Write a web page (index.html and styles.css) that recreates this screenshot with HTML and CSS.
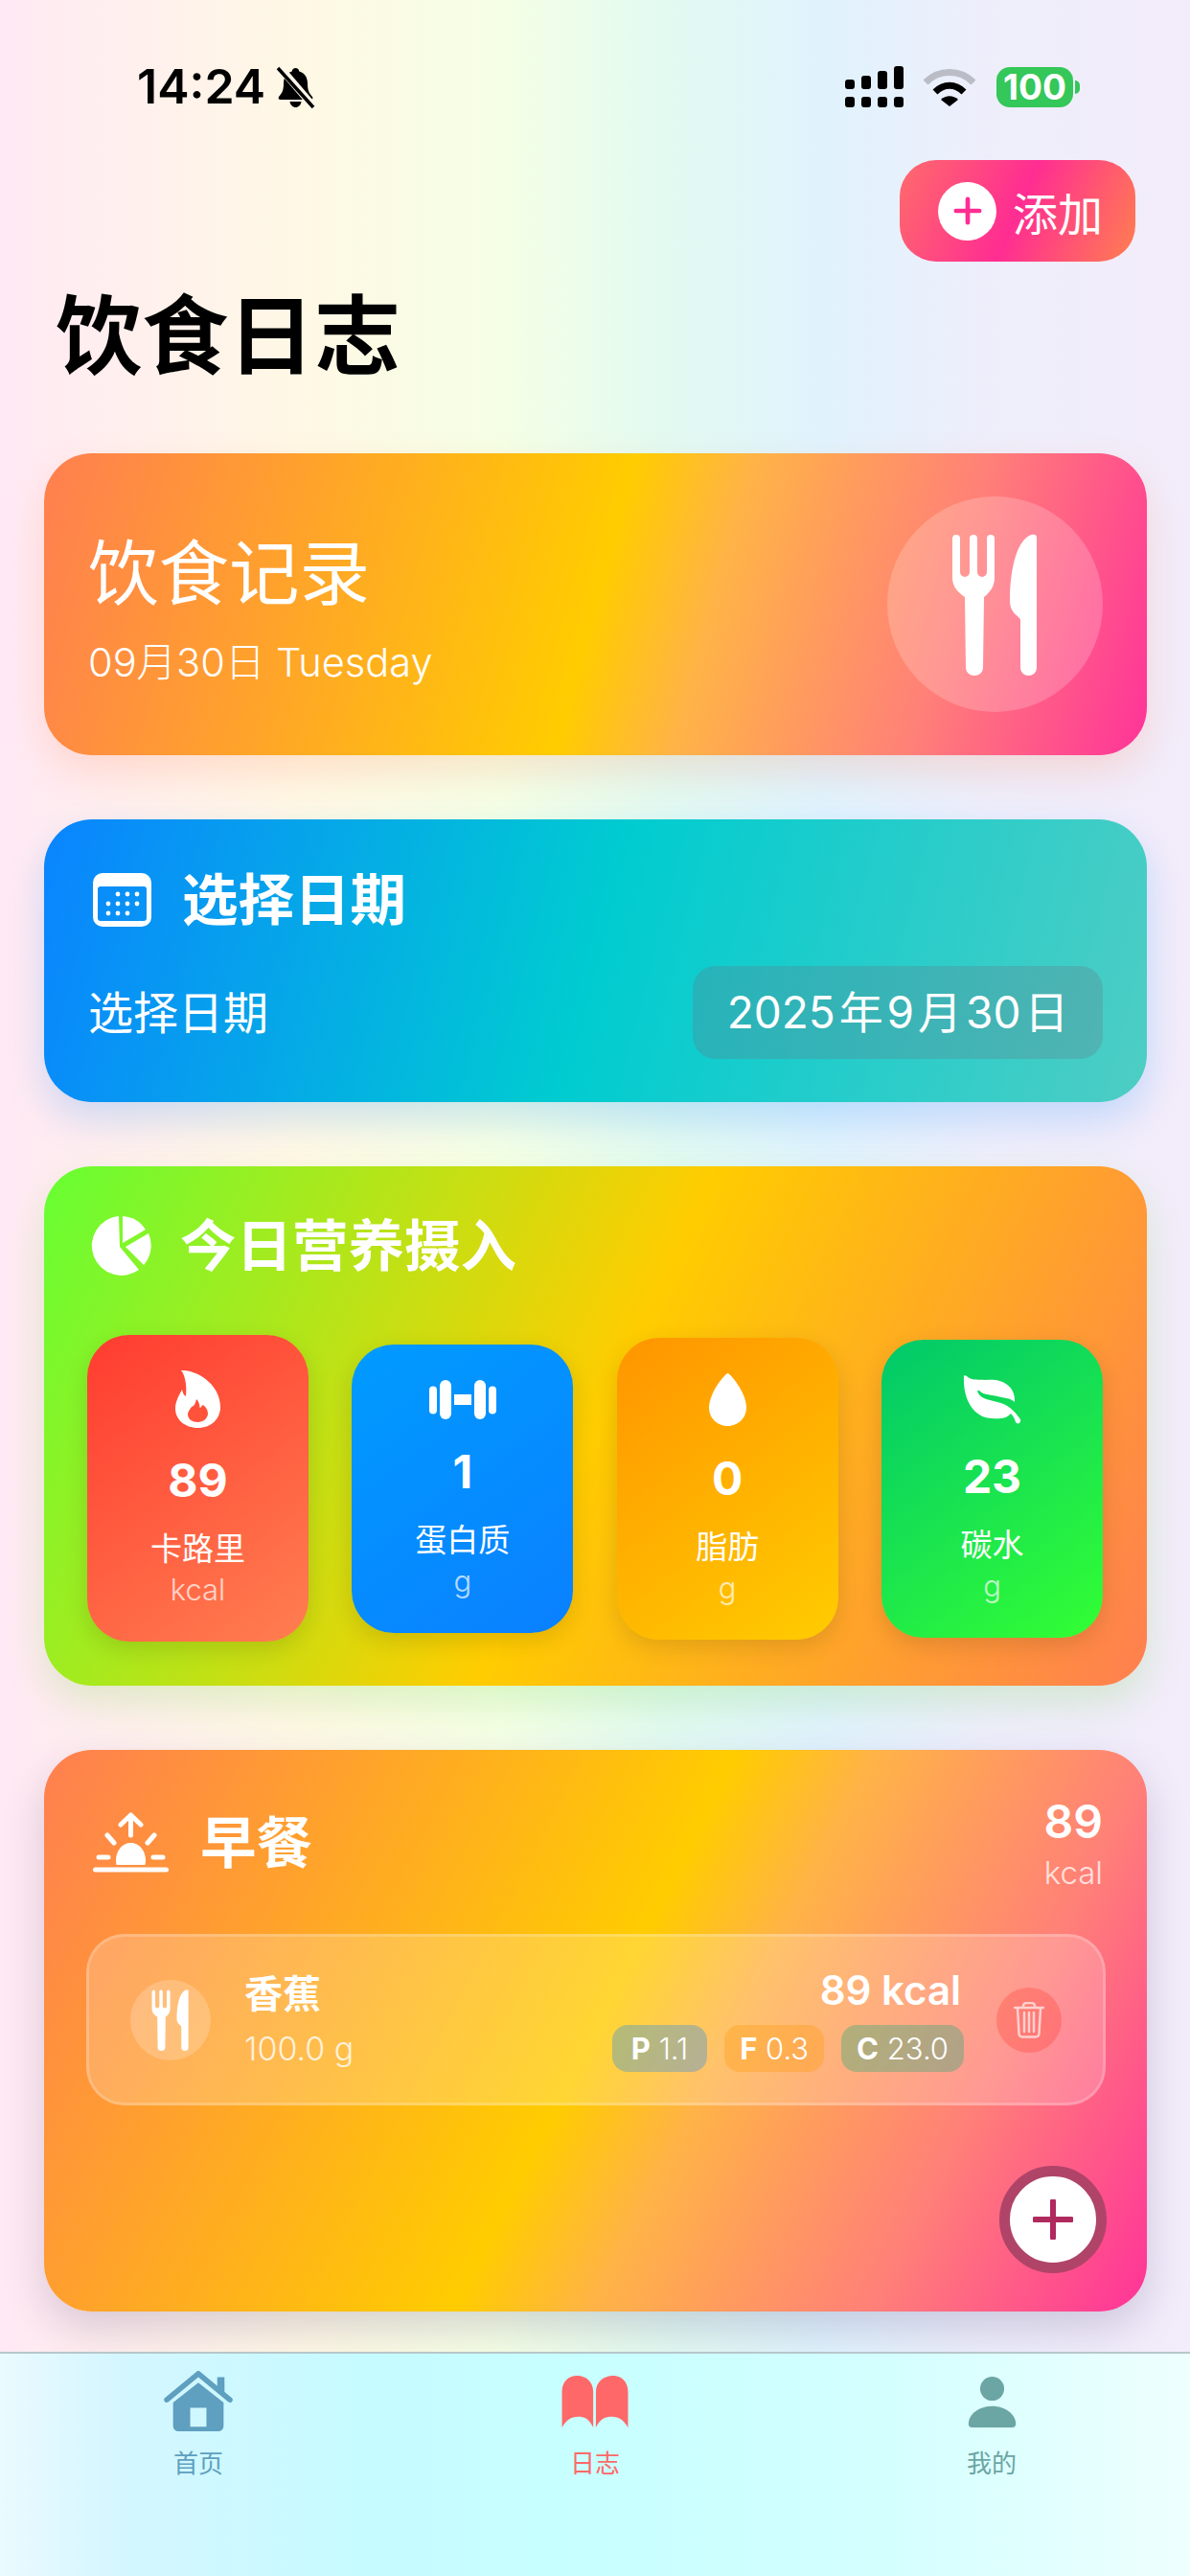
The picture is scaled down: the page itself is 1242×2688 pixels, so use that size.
FILE: index.html
```html
<!DOCTYPE html>
<html lang="zh-CN">
<head>
<meta charset="utf-8">
<title>饮食日志</title>
<link rel="stylesheet" href="styles.css">
</head>
<body>
<svg class="defs" width="0" height="0" aria-hidden="true">
  <symbol id="cutlery" viewBox="0 0 90 148">
    <path d="M0 5a4 4 0 0 1 8 0V40a5 5 0 0 0 10 0V5a4 4 0 0 1 8 0V40a5 5 0 0 0 10 0V5a4 4 0 0 1 8 0V46C44 56 38 62 33 66L32 140a9 8 0 0 1-18 0L13 66C7 62 0 56 0 46Z"/>
    <path d="M88 4V140a8.500 8 0 0 1-17 0L71 90C71 86 60 84 60 70C60 40 66 10 80 2C84 0 88 0 88 4Z"/>
  </symbol>
</svg>

<div class="status">
  <div class="status-left">
    <span class="time">14:24</span>
    <svg class="bell" viewBox="0 0 39 42">
      <path d="M19.500 1C21.500 1 23 2.500 23.300 4.500C29 6 32 11 32 17C32 24 33.500 27 37 31C38 33 37 34 35 34H4C2 34 1 33 2 31C5.500 27 7 24 7 17C7 11 10 6 15.700 4.500C16 2.500 17.500 1 19.500 1Z"/>
      <path d="M13.500 36H25.500C25 39.500 22.500 42 19.500 42C16.500 42 14 39.500 13.500 36Z"/>
      <path class="bell-gap" d="M2 -1L38 41"/>
      <path class="bell-slash" d="M1 1L38 42"/>
    </svg>
  </div>
  <div class="status-right">
    <svg class="signal" viewBox="0 0 61 43">
      <rect x="0" y="14" width="10" height="10" rx="3"/><rect x="17" y="10" width="10" height="14" rx="3"/><rect x="34" y="5" width="10" height="19" rx="3"/><rect x="51" y="0" width="10" height="24" rx="3"/>
      <rect x="0" y="32" width="10" height="11" rx="3"/><rect x="17" y="32" width="10" height="11" rx="3"/><rect x="34" y="32" width="10" height="11" rx="3"/><rect x="51" y="32" width="10" height="11" rx="3"/>
    </svg>
    <svg class="wifi" viewBox="0 0 54 40">
      <path class="wifi-dim" d="M2 15C16 1 38 1 52 15"/>
      <path class="wifi-on" d="M12 25C21 16 33 16 42 25"/>
      <path d="M18 33C23 28 31 28 36 33L27 40Z"/>
    </svg>
    <div class="battery"><span class="battery-body">100</span><span class="battery-cap"></span></div>
  </div>
</div>

<header class="page-head">
  <button class="add-btn">
    <span class="add-disc"><svg viewBox="0 0 32 32"><path d="M16 3V29M3 16H29"/></svg></span>
    <span>添加</span>
  </button>
  <h1 class="page-title">饮食日志</h1>
</header>

<main class="feed">
  <section class="card card-hero">
    <div class="hero-text">
      <div class="hero-title">饮食记录</div>
      <div class="hero-sub">09月30日 Tuesday</div>
    </div>
    <div class="hero-disc"><svg class="hero-icon"><use href="#cutlery"/></svg></div>
  </section>

  <section class="card card-date">
    <div class="card-head">
      <svg class="ico-cal" viewBox="0 0 61 56">
        <path fill-rule="evenodd" d="M10 0H51A10 10 0 0 1 61 10V46A10 10 0 0 1 51 56H10A10 10 0 0 1 0 46V10A10 10 0 0 1 10 0ZM8 14A3 3 0 0 0 5 17V47A3 3 0 0 0 8 50H53A3 3 0 0 0 56 47V17A3 3 0 0 0 53 14Z"/>
        <circle cx="26" cy="22" r="2.400"/><circle cx="36" cy="22" r="2.400"/><circle cx="46" cy="22" r="2.400"/>
        <circle cx="16" cy="32" r="2.400"/><circle cx="26" cy="32" r="2.400"/><circle cx="36" cy="32" r="2.400"/><circle cx="46" cy="32" r="2.400"/>
        <circle cx="16" cy="42" r="2.400"/><circle cx="26" cy="42" r="2.400"/><circle cx="36" cy="42" r="2.400"/>
      </svg>
      <h2 class="card-title">选择日期</h2>
    </div>
    <div class="date-row">
      <span class="date-label">选择日期</span>
      <span class="date-pill">2025 年 9 月 30 日</span>
    </div>
  </section>

  <section class="card card-nutri">
    <div class="card-head">
      <svg class="ico-pie" viewBox="0 0 63 63">
        <path d="M29 1A31 31 0 1 0 50 57L30 33Z"/>
        <path d="M33 1A31 31 0 0 1 57 15L33 29Z"/>
        <path d="M60 19A31 31 0 0 1 55 52L36 33Z"/>
      </svg>
      <h2 class="card-title">今日营养摄入</h2>
    </div>
    <div class="tiles">
      <div class="tile tile-cal">
        <svg class="ico-flame" viewBox="0 0 47 60"><path fill-rule="evenodd" d="M7 1C5 0 6 0 8 0C28 1 47 18 47 38C47 51 37 60 23.500 60C10 60 0 51 0 40C0 32 4 26 7 20C8 24 9 26 11 27C12 18 11 8 7 1ZM22 30C21 34 20 37 17 38C15.500 40 13 43 13 46C13 51 18 54 23.500 54C29 54 34 50 34 45C34 40 30 36 28 36C27.500 38 26.500 39 25.500 39C25.500 36 24.500 32 22 30Z"/></svg>
        <div class="tile-val">89</div><div class="tile-name">卡路里</div><div class="tile-unit">kcal</div>
      </div>
      <div class="tile tile-pro">
        <svg class="ico-bell2" viewBox="0 0 70 41"><rect x="0" y="6.500" width="8" height="29" rx="4"/><rect x="11" y="0" width="12" height="41" rx="6"/><rect x="26" y="15" width="18" height="11"/><rect x="47" y="0" width="12" height="41" rx="6"/><rect x="62" y="6.500" width="8" height="29" rx="4"/></svg>
        <div class="tile-val">1</div><div class="tile-name">蛋白质</div><div class="tile-unit">g</div>
      </div>
      <div class="tile tile-fat">
        <svg class="ico-drop" viewBox="0 0 39 55"><path d="M19.500 0C22 0 39 20 39 36C39 47 30 55 19.500 55C9 55 0 47 0 36C0 20 17 0 19.500 0Z"/></svg>
        <div class="tile-val">0</div><div class="tile-name">脂肪</div><div class="tile-unit">g</div>
      </div>
      <div class="tile tile-carb">
        <svg class="ico-leaf" viewBox="0 0 61 51"><path d="M1 2C0 0 3 0 4 1C8 5 14 5 24 5C42 3 55 12 54 28C50 24 44 24 36 22C26 20 20 20 17 16C15 15 15 17 16 19C20 25 28 26 36 28C46 30 53 36 60 46C61 50 57 52 55 49C54 45 52 42 50 40C46 45 38 46 30 45C10 44 0 24 1 2Z"/></svg>
        <div class="tile-val">23</div><div class="tile-name">碳水</div><div class="tile-unit">g</div>
      </div>
    </div>
  </section>

  <section class="card card-meal">
    <div class="meal-head">
      <div class="meal-left">
        <svg class="ico-sun" viewBox="0 0 79 63">
          <path class="sun-stroke" d="M39.500 3V24M29 13L39.500 3L50 13M15 24L22 32M64 24L57 32M6 47H16M63 47H73M2.500 60H76.500"/>
          <path d="M24.500 55C22 42 30 32 39.500 32C49 32 57 42 54.500 55Z"/>
        </svg>
        <h2 class="card-title">早餐</h2>
      </div>
      <div class="meal-total">
        <div class="meal-num">89</div>
        <div class="meal-unit">kcal</div>
      </div>
    </div>
    <div class="food">
      <div class="food-disc"><svg class="food-icon"><use href="#cutlery"/></svg></div>
      <div class="food-info">
        <div class="food-name">香蕉</div>
        <div class="food-qty">100.0 g</div>
      </div>
      <div class="food-macros">
        <div class="food-kcal">89 kcal</div>
        <div class="chips">
          <span class="chip chip-p"><b>P</b> 1.1</span>
          <span class="chip chip-f"><b>F</b> 0.3</span>
          <span class="chip chip-c"><b>C</b> 23.0</span>
        </div>
      </div>
      <div class="food-del">
        <svg viewBox="0 0 32 38"><path d="M1 6H31M10 6V4A3 3 0 0 1 13 1H19A3 3 0 0 1 22 4V6M4 6L5.500 33A3.500 3.500 0 0 0 9 36.500H23A3.500 3.500 0 0 0 26.500 33L28 6M11 11V31M16 11V31M21 11V31"/></svg>
      </div>
    </div>
    <div class="fab"><svg viewBox="0 0 42 42"><path d="M21 2V40M2 21H40"/></svg></div>
  </section>
</main>

<nav class="tabbar">
  <div class="tab tab-home">
    <svg class="ico-home" viewBox="0 0 76 68">
      <path fill-rule="evenodd" d="M38 13L66 35V61A6 6 0 0 1 60 67H16A6 6 0 0 1 10 61V35ZM29 41V62H47V41Z"/>
      <path class="home-roof" d="M3 32L38 3L73 32"/>
      <path d="M59 7H67V27L59 20Z"/>
    </svg>
    <span>首页</span>
  </div>
  <div class="tab tab-log">
    <svg class="ico-book" viewBox="0 0 74 58">
      <path d="M0 58V18C0 6 8 0 17 0C27 0 35 7 35 18V58C30 48 25 46 18 46C10 46 5 50 0 58Z"/>
      <path d="M74 58V18C74 6 66 0 57 0C47 0 38 7 38 18V58C43 48 49 46 56 46C64 46 69 50 74 58Z"/>
    </svg>
    <span>日志</span>
  </div>
  <div class="tab tab-me">
    <svg class="ico-me" viewBox="0 0 53 57">
      <circle cx="26.500" cy="13.500" r="13.500"/>
      <path d="M0 53C0 42 12 33 26.500 33C41 33 53 42 53 53Q53 57 49 57H4Q0 57 0 53Z"/>
    </svg>
    <span>我的</span>
  </div>
</nav>
</body>
</html>
```

FILE: styles.css
```css
* { box-sizing: border-box; margin: 0; padding: 0; }
html, body { width: 1242px; height: 2688px; overflow: hidden; }
body {
  display: flex;
  flex-direction: column;
  font-family: Inter, "Noto Sans CJK SC", sans-serif;
  color: #fff;
  background: linear-gradient(90deg, #ffe9f4 0%, #fff8e5 25%, #f5ffe5 42%, #e2faf1 56%, #e0f3fd 69%, #eeeefb 83%, #f3ecfa 100%);
}
.defs { position: absolute; }
svg { display: block; fill: currentColor; }

/* status bar */
.status { display: flex; justify-content: space-between; padding: 69px 115px 0 143px; height: 112px; color: #000; }
.status-left { display: flex; align-items: center; gap: 12px; height: 43px; }
.time { font-size: 50px; font-weight: 600; line-height: 43px; }
.bell { width: 39px; height: 42px; overflow: visible; }
.bell-gap { fill: none; stroke: #fff7ea; stroke-width: 8px; }
.bell-slash { fill: none; stroke: #000; stroke-width: 3.5px; }
.status-right { display: flex; align-items: center; height: 43px; }
.signal { width: 61px; height: 43px; margin-right: 21px; }
.wifi { width: 54px; height: 40px; margin-right: 22px; }
.wifi-dim { fill: none; stroke: #babdc6; stroke-width: 7px; }
.wifi-on { fill: none; stroke: #000; stroke-width: 7px; }
.battery { display: flex; align-items: center; }
.battery-body { width: 80px; height: 42px; border-radius: 14px; background: #34c759; color: #fff; font-size: 37px; font-weight: 700; line-height: 42px; text-align: center; }
.battery-cap { width: 5px; height: 14px; margin-left: 2px; border-radius: 0 6px 6px 0; background: #34c759; }

/* header */
.page-head { display: flex; flex-direction: column; padding: 55px 57px 0 58px; }
.add-btn {
  align-self: flex-end;
  display: flex;
  align-items: center;
  gap: 17px;
  width: 246px;
  height: 106px;
  padding-left: 40px;
  border: 0;
  border-radius: 38px;
  color: #fff;
  font: 400 47px Inter, "Noto Sans CJK SC", sans-serif;
  background: linear-gradient(113deg, #ff6b6b 0%, #ff2d92 50%, #ff7f50 100%);
}
.add-disc { display: flex; align-items: center; justify-content: center; width: 61px; height: 61px; border-radius: 50%; background: #fff; }
.add-disc svg { width: 30px; height: 30px; fill: none; stroke: #ff2d92; stroke-width: 5px; stroke-linecap: round; }
.page-title { margin-top: 33px; color: #000; font-size: 90px; font-weight: 700; line-height: 90px; }

/* cards */
.feed { flex: 1; display: flex; flex-direction: column; gap: 67px; padding: 77px 45px 0 46px; }
.card { border-radius: 50px; }
.card-hero {
  display: flex; align-items: center; justify-content: space-between;
  height: 315px; padding: 0 46px 0 46px;
  background: linear-gradient(105.3deg, #ff7f50 0%, #ffcc00 50%, #ffb347 60%, #ff8078 80%, #ff3399 100%);
  box-shadow: 0 18px 40px rgba(255, 127, 80, .2);
}
.hero-text { padding-top: 10px; }
.hero-title { font-size: 73.5px; line-height: 84px; }
.hero-sub { margin-top: 26px; font-size: 41.5px; font-weight: 300; line-height: 48px; }
.hero-disc { display: flex; align-items: center; justify-content: center; width: 225px; height: 225px; border-radius: 50%; background: rgba(255, 255, 255, .2); }
.hero-icon { width: 90px; height: 148px; }

.card-date {
  height: 295px; padding: 56px 46px 45px 46px;
  background: linear-gradient(104.4deg, #0a84ff 0%, #00ccd0 50%, #4ecdc4 100%);
  box-shadow: 0 18px 40px rgba(10, 132, 255, .2);
}
.card-head { display: flex; align-items: center; }
.card-title { font-size: 58.5px; font-weight: 700; line-height: 56px; }
.ico-cal { width: 61px; height: 56px; margin: 0 32px 0 5px; }
.date-row { display: flex; align-items: center; justify-content: space-between; margin-top: 41px; }
.date-label { padding-bottom: 6px; font-size: 47px; font-weight: 400; }
.date-pill { width: 428px; height: 97px; border-radius: 24px; background: rgba(110, 110, 128, .26); font-size: 46px; font-weight: 400; line-height: 97px; text-align: center; word-spacing: -9px; }

.card-nutri {
  padding: 51px 46px 46px 45px;
  background: linear-gradient(115.1deg, #66ff33 0%, #ffcc00 50%, #ff7f50 100%);
  box-shadow: 0 18px 40px rgba(102, 204, 51, .2);
}
.ico-pie { width: 63px; height: 63px; margin: 0 30px 0 4px; }
.tiles { display: flex; align-items: center; justify-content: space-between; margin-top: 62px; }
.tile { display: flex; flex-direction: column; align-items: center; width: 231px; padding: 37px 0 36px; border-radius: 44px; box-shadow: 0 8px 24px rgba(0, 0, 0, .12); }
.tile-cal { background: linear-gradient(144deg, #ff3b30 0%, #ff7f50 100%); }
.tile-pro { background: linear-gradient(144deg, #009bff 0%, #0a80ff 100%); }
.tile-fat { background: linear-gradient(144deg, #ff9500 0%, #ffcc00 100%); }
.tile-carb { background: linear-gradient(144deg, #00c86b 0%, #33ff33 100%); }
.ico-flame { width: 47px; height: 60px; }
.ico-bell2 { width: 70px; height: 41px; }
.ico-drop { width: 39px; height: 55px; }
.ico-leaf { width: 61px; height: 51px; }
.tile-val { margin-top: 31px; font-size: 48px; font-weight: 700; line-height: 48px; }
.tile-name { margin-top: 27px; font-size: 33px; line-height: 40px; }
.tile-unit { margin-top: 5px; font-size: 31px; font-weight: 300; line-height: 36px; opacity: .7; }

.card-meal {
  display: flex; flex-direction: column;
  height: 586px; padding: 50px 42px 40px 44px;
  background: linear-gradient(117deg, #ff7f50 0%, #ffcc00 50%, #ffb347 60%, #ff8078 80%, #ff3399 100%);
  box-shadow: 0 18px 44px rgba(70, 50, 110, .2);
}
.meal-head { display: flex; align-items: flex-start; justify-content: space-between; height: 142px; padding-right: 4px; }
.meal-left { display: flex; align-items: center; gap: 33px; padding: 15px 0 0 7px; }
.ico-sun { width: 79px; height: 63px; }
.sun-stroke { fill: none; stroke: #fff; stroke-width: 5px; stroke-linecap: round; stroke-linejoin: round; }
.meal-total { text-align: right; }
.meal-num { font-size: 48px; font-weight: 600; line-height: 50px; }
.meal-unit { margin-top: 8px; font-size: 33px; font-weight: 300; line-height: 40px; opacity: .75; }

.food { display: flex; align-items: center; height: 179px; padding: 0 43px 0 43px; border: 3px solid rgba(255, 255, 255, .2); border-radius: 40px; background: rgba(255, 255, 255, .2); margin-right: 1px; }
.food-disc { display: flex; align-items: center; justify-content: center; width: 84px; height: 84px; border-radius: 50%; background: rgba(255, 255, 255, .2); }
.food-icon { width: 44px; height: 64px; }
.food-info { margin-left: 35px; }
.food-name { font-size: 40px; font-weight: 700; line-height: 46px; }
.food-qty { margin-top: 14px; font-size: 34px; font-weight: 300; line-height: 40px; opacity: .8; }
.food-macros { display: flex; flex-direction: column; align-items: flex-end; margin-left: auto; }
.food-kcal { font-size: 42px; font-weight: 600; line-height: 48px; margin-right: 3px; }
.chips { display: flex; gap: 18px; margin-top: 12px; }
.chip { height: 49px; border-radius: 16px; font-size: 31px; font-weight: 300; line-height: 49px; }
.chip b { font-weight: 700; }
.chip-p { padding: 0 20px; background: rgba(10, 132, 255, .3); }
.chip-f { padding: 0 16px; background: rgba(255, 149, 0, .3); }
.chip-c { padding: 0 16px; background: rgba(20, 170, 120, .33); }
.food-del { display: flex; align-items: center; justify-content: center; width: 68px; height: 68px; margin-left: 34px; border-radius: 50%; background: rgba(255, 59, 48, .3); }
.food-del svg { width: 32px; height: 38px; fill: none; stroke: rgba(255, 255, 255, .65); stroke-width: 2.500px; stroke-linecap: round; stroke-linejoin: round; }
.fab { display: flex; align-items: center; justify-content: center; align-self: flex-end; width: 112px; height: 112px; margin: auto 0 0; border: 11px solid #b04468; border-radius: 50%; background: #fff; }
.fab svg { width: 42px; height: 42px; fill: none; stroke: #b02a5e; stroke-width: 6px; stroke-linecap: round; }

/* tab bar */
.tabbar {
  display: grid; grid-template-columns: repeat(3, 1fr);
  height: 234px; border-top: 2px solid #b7c7cb;
  background: linear-gradient(90deg, #eafaff 0%, #d4f6ff 10%, #c6fbff 30%, #c8ffff 50%, #d4ffff 75%, #eefffe 100%);
}
.tab { display: flex; flex-direction: column; align-items: center; height: 130px; padding-top: 18px; font-size: 26px; font-weight: 400; line-height: 30px; }
.tab-home { color: #5f9fc0; }
.tab-log { color: #ff6868; }
.tab-me { color: #6ba5a4; }
.ico-home { width: 76px; height: 68px; margin-bottom: 18px; }
.home-roof { fill: none; stroke: currentColor; stroke-width: 6px; stroke-linecap: round; stroke-linejoin: round; }
.ico-book { width: 74px; height: 58px; margin: 5px 0 23px; }
.ico-me { width: 53px; height: 57px; margin: 6px 0 23px; }
```
